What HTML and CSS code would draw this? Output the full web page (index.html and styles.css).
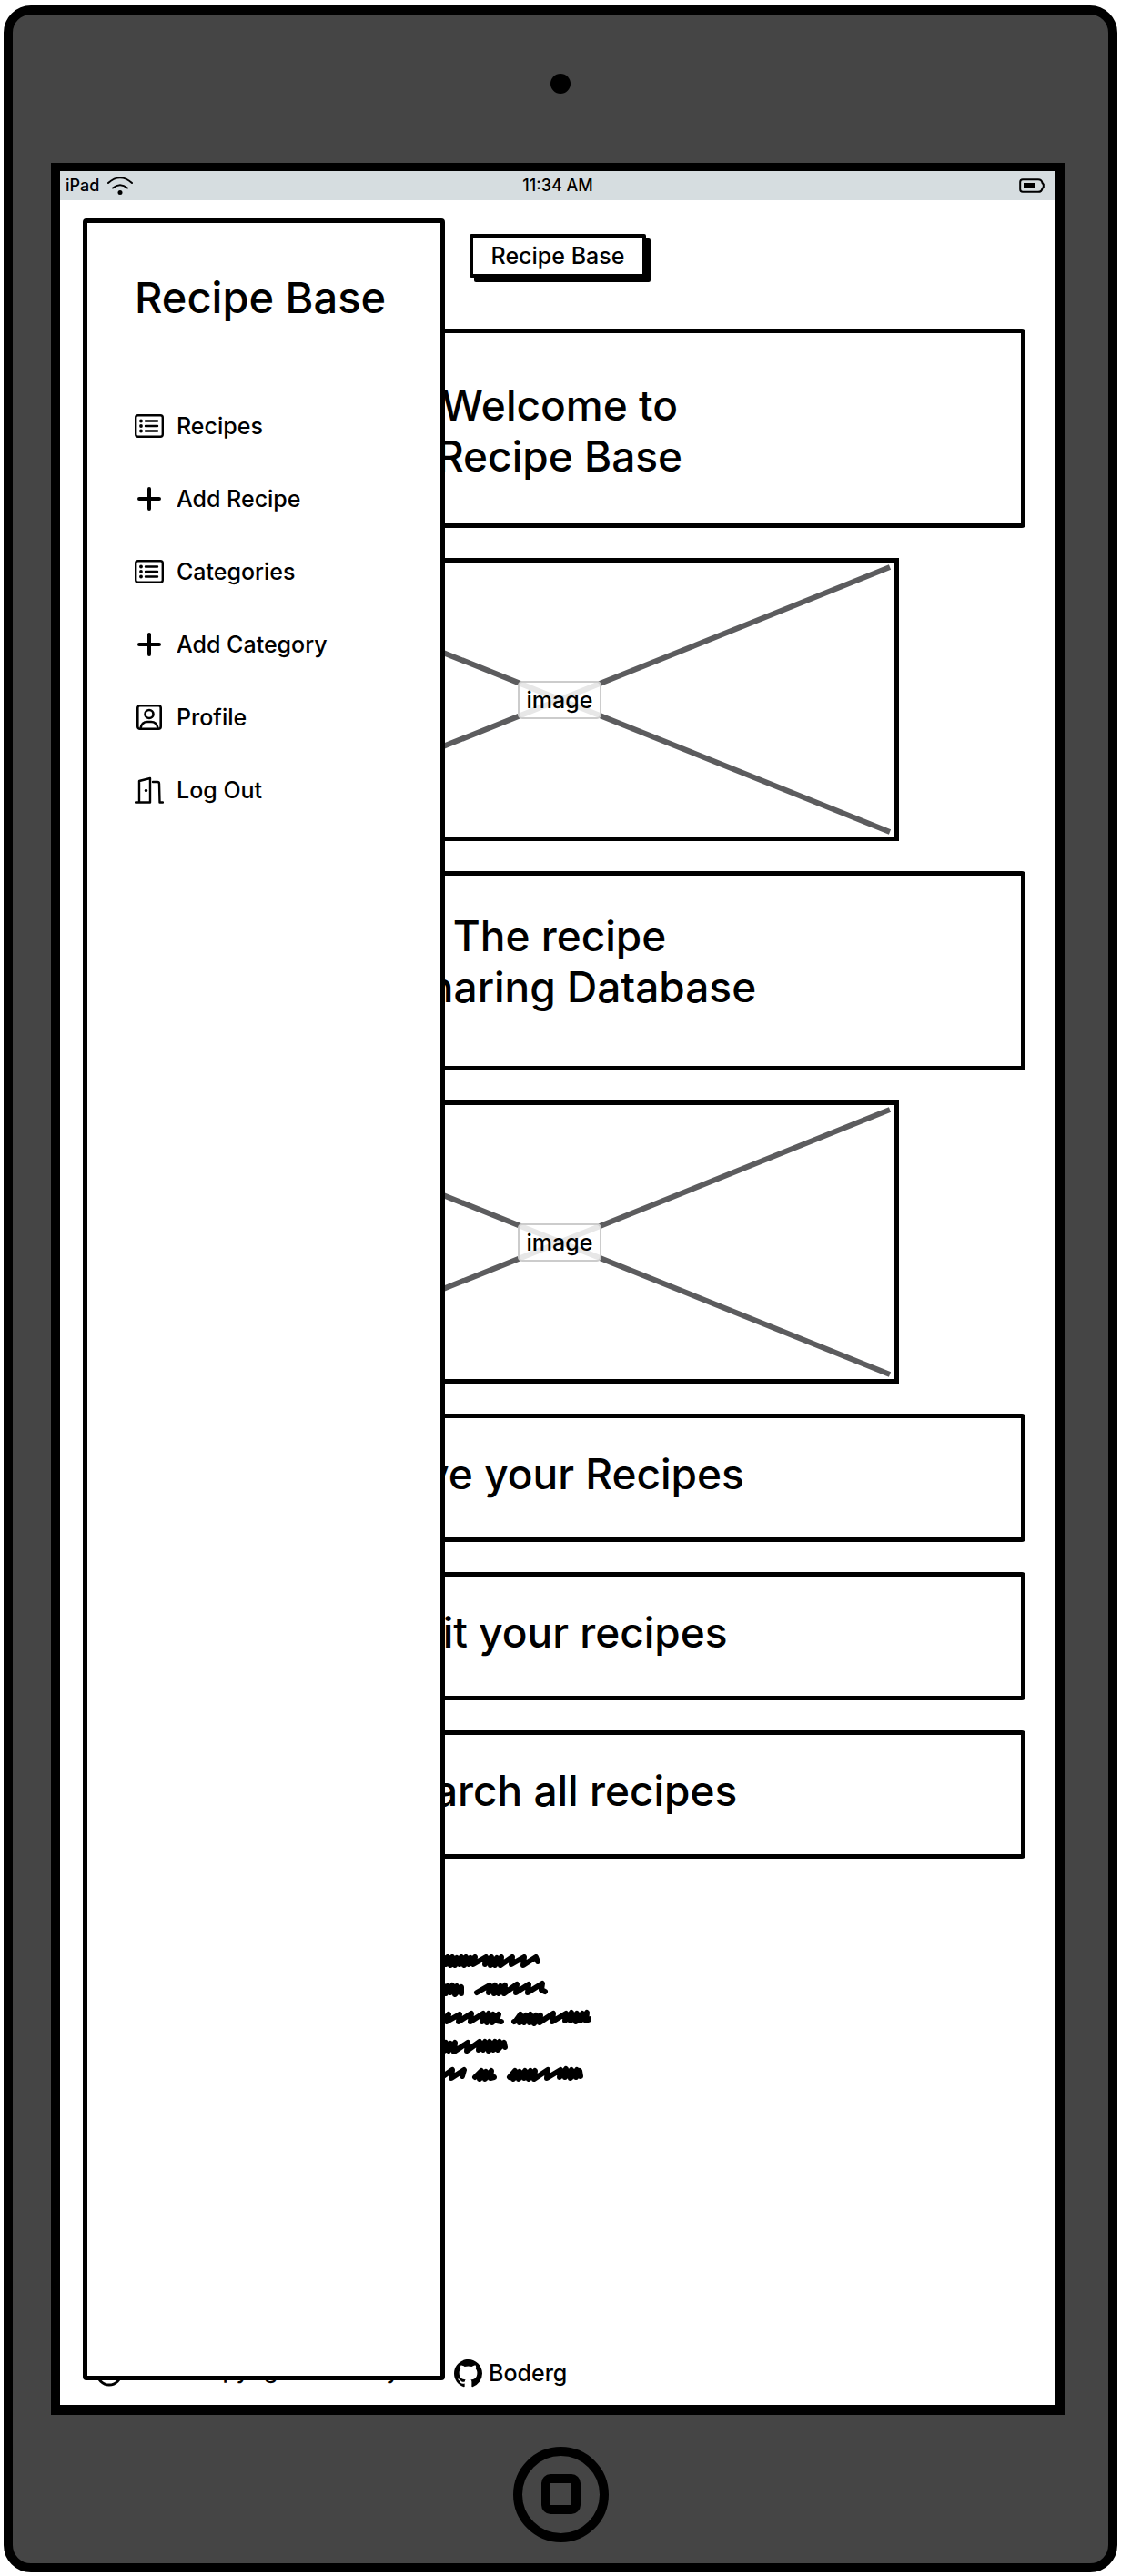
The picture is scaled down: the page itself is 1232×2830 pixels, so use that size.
FILE: index.html
```html
<!DOCTYPE html>
<html lang="en">
<head>
<meta charset="utf-8">
<meta name="viewport" content="width=device-width, initial-scale=1">
<title>Recipe Base</title>
<link rel="stylesheet" href="styles.css">
</head>
<body>
<div class="device">
  <div class="bezel bezel-top"><span class="camera"></span></div>

  <div class="screen">
    <div class="status">
      <span class="carrier">iPad
        <svg viewBox="0 0 28 20" width="28" height="20" aria-hidden="true"><path d="M1 7Q14-4.500 27 7M6 12.500Q14 6 22 12.500" fill="none" stroke="currentColor" stroke-width="2" stroke-linecap="round"/><circle cx="14" cy="17.500" r="2.500"/></svg>
      </span>
      <time>11:34 AM</time>
      <svg class="battery" viewBox="0 0 28 16" width="28" height="16" aria-hidden="true"><path d="M4 1.200H21Q25 1.200 25.500 5L26.800 6.500V9.500L25.500 11Q25 14.800 21 14.800H4Q1.200 14.800 1.200 12V4Q1.200 1.200 4 1.200Z" fill="none" stroke="currentColor" stroke-width="2"/><rect x="5" y="5" width="12" height="6"/></svg>
    </div>

    <header class="topbar"><button class="brand" type="button">Recipe Base</button></header>

    <main class="content">
      <section class="card card-lower"><h2>Welcome to<br>Recipe Base</h2></section>
      <figure class="placeholder">
        <svg viewBox="0 0 735 301" preserveAspectRatio="none" aria-hidden="true"><path d="M5 5L730 296M5 296L730 5"/></svg>
        <figcaption>image</figcaption>
      </figure>
      <section class="card card-upper"><h2>The recipe<br>&amp; Sharing Database</h2></section>
      <figure class="placeholder">
        <svg viewBox="0 0 735 301" preserveAspectRatio="none" aria-hidden="true"><path d="M5 5L730 296M5 296L730 5"/></svg>
        <figcaption>image</figcaption>
      </figure>
      <section class="card card-small"><h2>Save your Recipes</h2></section>
      <section class="card card-small"><h2>Edit your recipes</h2></section>
      <section class="card card-small"><h2>Search all recipes</h2></section>
    </main>

    <svg class="scribble" viewBox="0 0 320 141" width="320" height="141" aria-hidden="true">
      <path d="M150 11l7-8l-2 8l7-8l-2 8l7-8l-2 9l7-8l-2 8l7-9l-2 8l7-8l-2 9l7-8l-2 7l7-8l-2 8l14-8l-1 8l7-8l-1 9l7-8l-2 8l7-9l-1 9l13-9l-1 8l14-8l-1 9l14-9l2 5"/>
      <path d="M145 42l7-8l-2 8l7-8l-2 9l7-8l-2 8l7-9l-2 8l7-7l-2 9l7-8l0 7M194 42l14-8l-1 8l7-8l-1 9l7-8l-2 8l7-9l-1 9l14-10l-1 9l14-9l-1 9l16-10l-1 7l4 2"/>
      <path d="M156 74l7-8l-2 8l14-8l-1 8l14-9l-1 9l14-9l-1 9l7-9l-2 10l7-9l-1 9l7-9l-2 7l5 1M235 74l2-1l5-7l-1 9l7-8l-2 8l7-9l-1 9l7-8l-2 9l7-9l-1 8l15-10l-1 9l15-9l-1 8l7-9l-1 9l7-8l-1 9l7-9l-2 8l7-9l-1 9l5-2"/>
      <path d="M148 105l7-8l-2 8l7-8l-2 9l7-8l-2 8l7-9l-1 10l15-10l-1 9l14-10l-1 9l7-9l-2 9l7-9l-1 10l7-10l-2 9l7-9l-2 9l7-8l1 5"/>
      <path d="M154 136l13-9l-1 9l14-9l-2 7M192 135l7-7l-2 9l7-8l-1 8l7-9l-1 8l4-1M230 135l6-7l-2 9l7-8l-1 8l7-9l-1 8l7-8l-2 9l7-9l-1 9l15-10l-1 9l15-9l-1 8l7-9l-1 9l7-8l-1 9l7-9l-1 8l4-7l1 6"/>
    </svg>

    <footer class="footer">
      <span class="copyright">
        <svg viewBox="0 0 30 30" width="30" height="30" aria-hidden="true"><g fill="none" stroke="currentColor" stroke-width="3" stroke-linecap="round"><circle cx="15" cy="15" r="13"/><path d="M20 11Q15 6 11 11T11 19T20 19"/></g></svg>
        <span>2022 Copyright Made by</span>
      </span>
      <a class="github" href="#">
        <svg viewBox="0 0 16 16" width="31" height="31" aria-hidden="true"><path d="M8 0C3.580 0 0 3.580 0 8c0 3.540 2.290 6.530 5.470 7.590.4.070.55-.17.55-.38 0-.19-.01-.82-.01-1.490-2.010.37-2.530-.49-2.690-.94-.09-.23-.48-.94-.82-1.130-.28-.15-.68-.52-.01-.53.63-.01 1.080.58 1.230.82.72 1.210 1.870.87 2.330.66.07-.52.28-.87.51-1.070-1.780-.2-3.640-.89-3.640-3.950 0-.87.31-1.590.82-2.150-.08-.2-.36-1.020.08-2.120 0 0 .67-.21 2.200.82.64-.18 1.320-.27 2-.27s1.360.09 2 .27c1.530-1.040 2.200-.82 2.200-.82.44 1.100.16 1.920.08 2.120.51.56.82 1.270.82 2.150 0 3.070-1.870 3.750-3.650 3.950.29.25.54.73.54 1.480 0 1.070-.01 1.930-.01 2.200 0 .21.15.46.55.38A8.010 8.010 0 0 0 16 8c0-4.420-3.580-8-8-8Z"/></svg>
        Boderg
      </a>
    </footer>

    <aside class="drawer">
      <h1>Recipe Base</h1>
      <nav>
        <ul>
          <li><a href="#"><svg viewBox="0 0 32 32" width="32" height="32" aria-hidden="true"><rect x="1.200" y="4.200" width="29.600" height="23.600" rx="2.500" fill="none" stroke="currentColor" stroke-width="2.400"/><g fill="none" stroke="currentColor" stroke-width="2.400" stroke-linecap="round"><path d="M12 10.500H25M12 16H25M12 21.500H25"/></g><circle cx="7" cy="10.500" r="1.900"/><circle cx="7" cy="16" r="1.900"/><circle cx="7" cy="21.500" r="1.900"/></svg>Recipes</a></li>
          <li><a href="#"><svg viewBox="0 0 32 32" width="32" height="32" aria-hidden="true"><path d="M16 5V27M5 16H27" fill="none" stroke="currentColor" stroke-width="4" stroke-linecap="round"/></svg>Add Recipe</a></li>
          <li><a href="#"><svg viewBox="0 0 32 32" width="32" height="32" aria-hidden="true"><rect x="1.200" y="4.200" width="29.600" height="23.600" rx="2.500" fill="none" stroke="currentColor" stroke-width="2.400"/><g fill="none" stroke="currentColor" stroke-width="2.400" stroke-linecap="round"><path d="M12 10.500H25M12 16H25M12 21.500H25"/></g><circle cx="7" cy="10.500" r="1.900"/><circle cx="7" cy="16" r="1.900"/><circle cx="7" cy="21.500" r="1.900"/></svg>Categories</a></li>
          <li><a href="#"><svg viewBox="0 0 32 32" width="32" height="32" aria-hidden="true"><path d="M16 5V27M5 16H27" fill="none" stroke="currentColor" stroke-width="4" stroke-linecap="round"/></svg>Add Category</a></li>
          <li><a href="#"><svg viewBox="0 0 32 32" width="32" height="32" aria-hidden="true"><g fill="none" stroke="currentColor" stroke-width="2.600"><rect x="3.300" y="3.300" width="25.400" height="25.400" rx="2.500"/><circle cx="16" cy="12.500" r="4.500"/><path d="M6.500 28C7.500 22.500 10.500 21 14 21H18C21.500 21 24.500 22.500 25.500 28"/></g></svg>Profile</a></li>
          <li><a href="#"><svg viewBox="0 0 32 32" width="32" height="32" aria-hidden="true"><path d="M1 29.500H17V3L5 6V29.500M20 7H25Q27 7 27 9L27.500 29.500H31" fill="none" stroke="currentColor" stroke-width="2.400" stroke-linecap="round" stroke-linejoin="round"/><circle cx="12.500" cy="16.500" r="1.700"/></svg>Log Out</a></li>
        </ul>
      </nav>
    </aside>
  </div>

  <div class="bezel bezel-bottom"><button class="home" type="button" aria-label="Home"><span></span></button></div>
</div>
</body>
</html>
```
FILE: styles.css
```css
* { box-sizing: border-box; }

body {
  margin: 0;
  padding: 6px 4px 4px;
  min-height: 100vh;
  display: flex;
  background: #fff;
  color: #000;
  font: 500 25px/32px Inter, "Open Sans", sans-serif;
}

h1, h2 {
  margin: 0;
  font-size: 46px;
  line-height: 56px;
  font-weight: 500;
}

a { color: inherit; text-decoration: none; }
button { font: inherit; color: inherit; padding: 0; cursor: pointer; }
svg { display: block; flex: none; fill: currentColor; }

/* Tablet frame */
.device {
  flex: 1;
  display: flex;
  flex-direction: column;
  border: 10px solid #000;
  border-radius: 30px;
  background: #454545;
}

.bezel {
  height: 163px;
  display: flex;
  align-items: center;
  justify-content: center;
}
.bezel-top { padding-bottom: 11px; }
.bezel-bottom { padding-top: 11px; }

.camera {
  width: 22px;
  height: 22px;
  border-radius: 50%;
  background: #000;
}

.home {
  width: 105px;
  height: 105px;
  display: grid;
  place-items: center;
  border: 10px solid #000;
  border-radius: 50%;
  background: none;
}
.home span {
  width: 43px;
  height: 44px;
  border: 10px solid #000;
  border-radius: 10px;
}

.screen {
  position: relative;
  flex: 1;
  display: flex;
  flex-direction: column;
  margin: 0 48px 0 42px;
  border: solid #000;
  border-width: 9px 10px 11px;
  background: #fff;
}

/* Status bar */
.status {
  height: 32px;
  display: grid;
  grid-template-columns: 1fr auto 1fr;
  align-items: center;
  padding: 0 6px;
  background: #d6dde0;
  font-size: 18px;
}
.carrier { display: flex; align-items: center; gap: 9px; }
.battery { justify-self: end; margin-right: 6px; }

.topbar {
  display: flex;
  justify-content: center;
  padding: 37px 0 56px;
}
.brand {
  height: 48px;
  padding: 0 20px;
  border: 4px solid #000;
  border-radius: 2px;
  background: #fff;
  box-shadow: 5px 5px 0 #000;
}

/* Page content */
.content {
  display: flex;
  flex-direction: column;
  gap: 33px;
  margin: 0 33px 0 37px;
}

.card {
  border: 5px solid #000;
  border-radius: 4px;
  text-align: center;
}
.card-lower { padding: 51px 0 46px; }
.card-upper { padding: 38px 0 59px; }
.card-small { padding: 33px 0 42px; }

.placeholder {
  width: 100%;
  max-width: 745px;
  height: 311px;
  margin: 0 auto;
  display: grid;
  place-items: center;
  border: 5px solid #000;
}
.placeholder svg {
  grid-area: 1 / 1;
  width: 100%;
  height: 301px;
}
.placeholder path { fill: none; stroke: #5c5c5e; stroke-width: 6; }
.placeholder figcaption {
  grid-area: 1 / 1;
  z-index: 1;
  padding: 3px 8px;
  border: 2px solid #ccc;
  border-radius: 5px;
  background: rgba(255, 255, 255, 0.85);
}

.scribble { margin: 105px 0 60px 264px; }
.scribble path {
  fill: none;
  stroke: #000;
  stroke-width: 6;
  stroke-linecap: round;
  stroke-linejoin: round;
}

.footer {
  height: 34px;
  margin: auto 33px 18px 39px;
  display: flex;
  align-items: center;
  gap: 7px;
}
.copyright {
  width: 387px;
  display: flex;
  align-items: center;
  gap: 7px;
  white-space: nowrap;
}
.copyright span { padding-bottom: 6px; }
.github { display: flex; align-items: center; gap: 7px; }

/* Navigation drawer, open over the page */
.drawer {
  position: absolute;
  top: 52px;
  bottom: 27px;
  left: 25px;
  width: 398px;
  padding: 54px 20px 20px 52px;
  border: 5px solid #000;
  border-radius: 4px;
  background: #fff;
}
.drawer h1 { margin-bottom: 73px; font-size: 47px; }
.drawer ul { margin: 0; padding: 0; list-style: none; }
.drawer a {
  height: 80px;
  display: flex;
  align-items: center;
  gap: 14px;
}
```
